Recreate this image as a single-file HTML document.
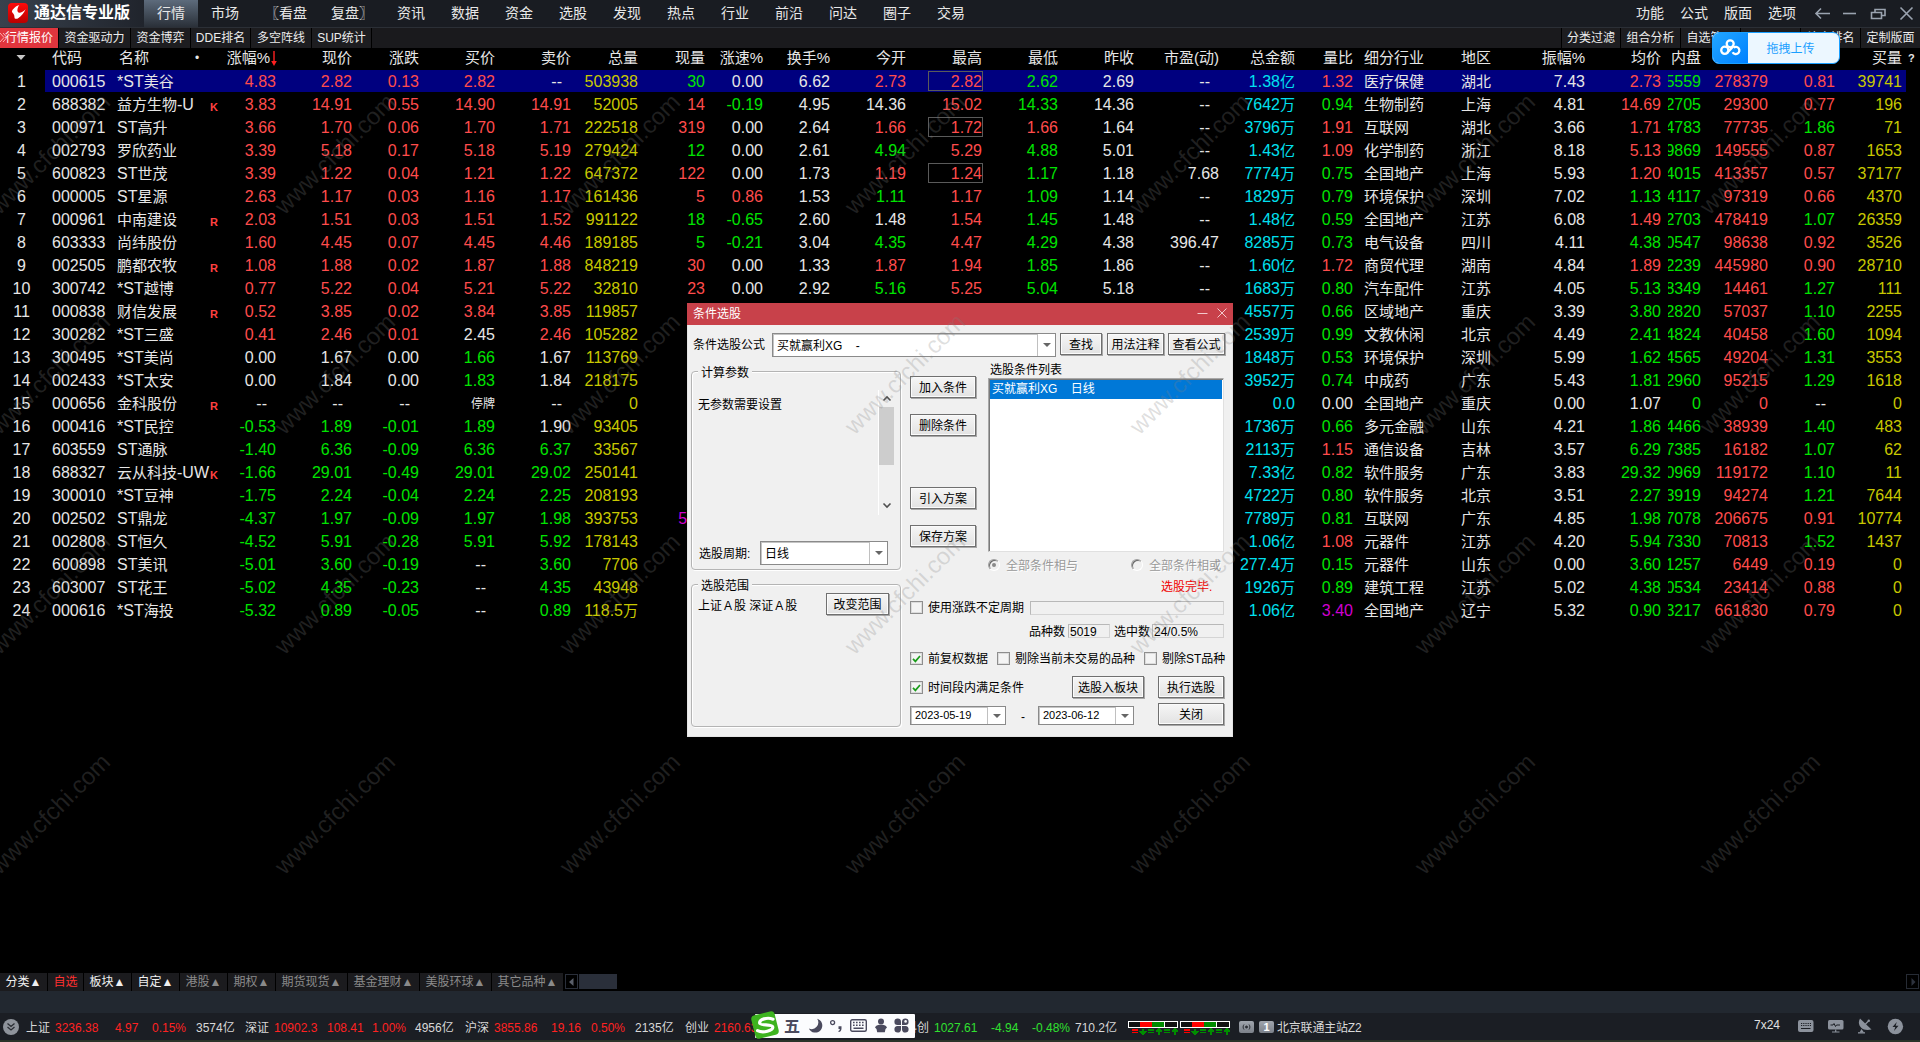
<!DOCTYPE html>
<html lang="zh-CN">
<head>
<meta charset="utf-8">
<title>通达信专业版</title>
<style>
*{box-sizing:border-box;margin:0;padding:0}
html,body{width:1920px;height:1042px;overflow:hidden;background:#000}
body{position:relative;font-family:"Liberation Sans","Noto Sans CJK SC",sans-serif;color:#e6e6e6;font-size:16px}
.abs{position:absolute}
/* title bar */
#tb{position:absolute;left:0;top:0;width:1920px;height:28px;background:#191c22;border-bottom:1px solid #2b2f36}
#tb .brand{position:absolute;left:0;top:0;width:144px;height:27px;background:linear-gradient(90deg,#38414d,#20242c)}
#tb .logo{position:absolute;left:8px;top:3px;width:20px;height:20px;border-radius:4px;background:linear-gradient(#ff0a0a,#b80000)}
#tb .ttl{position:absolute;left:34px;top:1px;font-size:16px;font-weight:bold;color:#fff;line-height:24px;letter-spacing:0px}
#tb .mi{position:absolute;top:0;height:27px;line-height:26px;font-size:14px;color:#e8e8e8;white-space:nowrap}
#tb .act{position:absolute;left:144px;top:0;width:54px;height:27px;background:linear-gradient(#5d6b7c,#2a3038)}
/* tab row */
#tabs{position:absolute;left:0;top:28px;width:1920px;height:20px;background:#1a1a1d}
#tabs .t{position:absolute;top:0;height:20px;line-height:20px;font-size:12px;color:#ececec;text-align:center;border-right:1px solid #000;background:#1d1d20;white-space:nowrap}
#tabs .t.on{background:#e0353d;color:#fff}
/* header */
#hd{position:absolute;left:0;top:48px;width:1920px;height:22px}
#hd span{position:absolute;top:0;line-height:20px;font-size:15px;color:#e6e6e6;white-space:nowrap}
/* rows */
.row{position:absolute;left:0;width:1920px;height:23px;line-height:24px;font-size:16px;white-space:nowrap}
.row.sel::before{content:"";position:absolute;left:45px;top:0;width:1861px;height:22px;background:#00007f}
.row span{position:absolute;top:0}
.n{left:0;width:43px;text-align:center;color:#e6e6e6}
.cd{left:52px;color:#e6e6e6}
.nm{left:117px;color:#e6e6e6;font-size:16px}
.v i,.nm i{font-style:normal;font-size:15px}
.mk{left:210px;top:2px!important;font-size:11px;font-weight:bold;color:#ff4040}
.ind{left:1364px;font-size:15px}.ar{left:1461px;font-size:15px}
.v{text-align:right}
.tp{font-size:12px}
.clip{left:1668px;width:33px;height:23px;overflow:hidden}
.clip b{position:absolute;right:0;top:0;font-weight:normal}
.bx{left:928px;top:1px!important;width:55px;height:20px;border:1px solid #5a5a5a}
.r{color:#ff4c4c}.g{color:#00e400}.w{color:#e6e6e6}.y{color:#c8c800}.c{color:#00e0f0}.m{color:#d000d0}
</style>
</head>
<body>
<style>
#bt{position:absolute;left:0;top:973px;width:1920px;height:18px;background:#000}
#bt .b{position:absolute;top:0;height:18px;line-height:19px;font-size:12px;color:#f0f0f0;background:#1b1b1e;text-align:center;white-space:nowrap;letter-spacing:0}
#bt .b.rd{color:#ff3030}
#bt .b.ds{color:#8a8a8a}
#bt .sb1{position:absolute;left:565px;top:1px;width:13px;height:15px;background:#000;border:1px solid #2a2f3a}
#bt .sb2{position:absolute;left:579px;top:1px;width:38px;height:15px;background:#2a2f3a}
#bt .sb3{position:absolute;left:1906px;top:1px;width:13px;height:15px;border:1px solid #262b34;background:#000}
#band{position:absolute;left:0;top:991px;width:1920px;height:22px;background:#222830}
#st{position:absolute;left:0;top:1013px;width:1920px;height:29px;background:#1b1e24;border-bottom:2px solid #2a3329}
#st span{position:absolute;top:0;line-height:31px;font-size:12px;color:#d8d8d8;white-space:nowrap}
#st span.sr{color:#ff2222}
#st span.sg{color:#30e030}
#st .dn{position:absolute;left:3px;top:6px;width:16px;height:16px;border-radius:8px;background:#8e939b}
#st .ime{position:absolute;left:750px;top:2px;width:165px;height:23px;background:#fbfbfb;border-radius:2px}
</style>
<div id="tb">
 <div class="brand"></div>
 <div class="logo"><svg width="20" height="20" viewBox="0 0 20 20"><path d="M11.3 2 C8 3 4.500 6 3.900 8.600 C4.500 10.500 6 11 6.250 12.500 L6.600 15.200 C7.500 16 9 15.800 9.800 15.400 C13 13.500 16 10 17.600 6.250 C15.500 8.500 13.500 9.800 11.300 9.800 C10 9.500 9.300 8.300 9.400 7 C9.600 5 10.300 3.200 11.300 2 Z" fill="#fff"/></svg></div>
 <div class="ttl">通达信专业版</div>
 <div class="act"></div>
 <span class="mi" style="left:157px">行情</span>
 <span class="mi" style="left:211px">市场</span>
 <span class="mi" style="left:265px">〖看盘</span>
 <span class="mi" style="left:331px">复盘〗</span>
 <span class="mi" style="left:397px">资讯</span>
 <span class="mi" style="left:451px">数据</span>
 <span class="mi" style="left:505px">资金</span>
 <span class="mi" style="left:559px">选股</span>
 <span class="mi" style="left:613px">发现</span>
 <span class="mi" style="left:667px">热点</span>
 <span class="mi" style="left:721px">行业</span>
 <span class="mi" style="left:775px">前沿</span>
 <span class="mi" style="left:829px">问达</span>
 <span class="mi" style="left:883px">圈子</span>
 <span class="mi" style="left:937px">交易</span>
 <span class="mi" style="left:1636px">功能</span>
 <span class="mi" style="left:1680px">公式</span>
 <span class="mi" style="left:1724px">版面</span>
 <span class="mi" style="left:1768px">选项</span>
 <svg class="abs" style="left:1812px;top:4px" width="106" height="20" viewBox="0 0 106 20" fill="none" stroke="#9aa3b0" stroke-width="1.6">
  <path d="M18 9.5 H4 M9 4.5 L4 9.5 L9 14.5"/>
  <path d="M31 9.5 H44" />
  <path d="M59.5 8.5 h10 v6 h-10 z M63 8.5 v-3 h10 v6 h-3.5"/>
  <path d="M88.5 3.5 L100.5 15.5 M100.5 3.5 L88.5 15.5"/>
 </svg>
</div>
<div id="tabs">
 <div class="t on" style="left:0;width:59px">行情报价</div>
 <svg class="abs" style="left:0;top:5px" width="8" height="9" viewBox="0 0 8 9" stroke="#ffb0b0" stroke-width="1" fill="none"><path d="M0 0 L4 4.5 L0 9 M3 0 L7 4.5 L3 9"/></svg>
 <div class="t" style="left:59px;width:72px">资金驱动力</div>
 <div class="t" style="left:131px;width:60px">资金博弈</div>
 <div class="t" style="left:191px;width:60px">DDE排名</div>
 <div class="t" style="left:251px;width:61px">多空阵线</div>
 <div class="t" style="left:312px;width:60px">SUP统计</div>
 <div class="t" style="left:1561px;width:60px;border-left:1px solid #000">分类过滤</div>
 <div class="t" style="left:1621px;width:60px">组合分析</div>
 <div class="t" style="left:1681px;width:60px">自选管理</div>
 <div class="t" style="left:1741px;width:60px"></div>
 <div class="t" style="left:1801px;width:60px">综合排名</div>
 <div class="t" style="left:1861px;width:59px;border-right:none">定制版面</div>
</div>
<div id="hd">
 <svg class="abs" style="left:16px;top:6px" width="10" height="7" viewBox="0 0 10 7"><path d="M0.5 1 H9.5 L5 6 Z" fill="#c8c8c8"/></svg>
 <span style="left:52px">代码</span>
 <span style="left:119px">名称</span>
 <span style="left:195px;font-size:12px">•</span>
 <span style="right:1650px">涨幅%</span>
 <svg class="abs" style="left:270px;top:3px" width="8" height="16" viewBox="0 0 8 16" stroke="#ff2020" fill="#ff2020"><path d="M4 0 V11" stroke-width="1.4"/><path d="M1.2 10 H6.8 L4 15 Z" stroke="none"/></svg>
 <span style="right:1568px">现价</span>
 <span style="right:1501px">涨跌</span>
 <span style="right:1425px">买价</span>
 <span style="right:1349px">卖价</span>
 <span style="right:1282px">总量</span>
 <span style="right:1215px">现量</span>
 <span style="right:1157px">涨速%</span>
 <span style="right:1090px">换手%</span>
 <span style="right:1014px">今开</span>
 <span style="right:938px">最高</span>
 <span style="right:862px">最低</span>
 <span style="right:786px">昨收</span>
 <span style="right:701px">市盈(动)</span>
 <span style="right:625px">总金额</span>
 <span style="right:567px">量比</span>
 <span style="left:1364px">细分行业</span>
 <span style="left:1461px">地区</span>
 <span style="right:335px">振幅%</span>
 <span style="right:259px">均价</span>
 <span style="left:1671px">内盘</span>
 <span style="right:18px">买量</span>
 <span style="left:1908px;font-size:11px;font-weight:bold">?</span>
</div>
<div id="grid">
<div class="row sel" style="top:70px">
<span class="n">1</span><span class="cd">000615</span><span class="nm">*ST<i>美谷</i></span>
<span class="v r" style="right:1644px">4.83</span>
<span class="v r" style="right:1568px">2.82</span>
<span class="v r" style="right:1501px">0.13</span>
<span class="v r" style="right:1425px">2.82</span>
<span class="v w" style="right:1358px">--</span>
<span class="v y" style="right:1282px">503938</span>
<span class="v g" style="right:1215px">30</span>
<span class="v w" style="right:1157px">0.00</span>
<span class="v w" style="right:1090px">6.62</span>
<span class="v r" style="right:1014px">2.73</span>
<span class="bx"></span>
<span class="v r" style="right:938px">2.82</span>
<span class="v g" style="right:862px">2.62</span>
<span class="v w" style="right:786px">2.69</span>
<span class="v w" style="right:710px">--</span>
<span class="v c" style="right:625px">1.38<i>亿</i></span>
<span class="v r" style="right:567px">1.32</span>
<span class="ind">医疗保健</span>
<span class="ar">湖北</span>
<span class="v w" style="right:335px">7.43</span>
<span class="v r" style="right:259px">2.73</span>
<span class="clip"><b class="g">225559</b></span>
<span class="v r" style="right:152px">278379</span>
<span class="v r" style="right:85px">0.81</span>
<span class="v y" style="right:18px">39741</span>
</div>
<div class="row" style="top:93px">
<span class="n">2</span><span class="cd">688382</span><span class="nm"><i>益方生物</i>-U</span>
<span class="mk">K</span>
<span class="v r" style="right:1644px">3.83</span>
<span class="v r" style="right:1568px">14.91</span>
<span class="v r" style="right:1501px">0.55</span>
<span class="v r" style="right:1425px">14.90</span>
<span class="v r" style="right:1349px">14.91</span>
<span class="v y" style="right:1282px">52005</span>
<span class="v r" style="right:1215px">14</span>
<span class="v g" style="right:1157px">-0.19</span>
<span class="v w" style="right:1090px">4.95</span>
<span class="v w" style="right:1014px">14.36</span>
<span class="v r" style="right:938px">15.02</span>
<span class="v g" style="right:862px">14.33</span>
<span class="v w" style="right:786px">14.36</span>
<span class="v w" style="right:710px">--</span>
<span class="v c" style="right:625px">7642<i>万</i></span>
<span class="v g" style="right:567px">0.94</span>
<span class="ind">生物制药</span>
<span class="ar">上海</span>
<span class="v w" style="right:335px">4.81</span>
<span class="v r" style="right:259px">14.69</span>
<span class="clip"><b class="g">22705</b></span>
<span class="v r" style="right:152px">29300</span>
<span class="v r" style="right:85px">0.77</span>
<span class="v y" style="right:18px">196</span>
</div>
<div class="row" style="top:116px">
<span class="n">3</span><span class="cd">000971</span><span class="nm">ST<i>高升</i></span>
<span class="v r" style="right:1644px">3.66</span>
<span class="v r" style="right:1568px">1.70</span>
<span class="v r" style="right:1501px">0.06</span>
<span class="v r" style="right:1425px">1.70</span>
<span class="v r" style="right:1349px">1.71</span>
<span class="v y" style="right:1282px">222518</span>
<span class="v r" style="right:1215px">319</span>
<span class="v w" style="right:1157px">0.00</span>
<span class="v w" style="right:1090px">2.64</span>
<span class="v r" style="right:1014px">1.66</span>
<span class="bx"></span>
<span class="v r" style="right:938px">1.72</span>
<span class="v r" style="right:862px">1.66</span>
<span class="v w" style="right:786px">1.64</span>
<span class="v w" style="right:710px">--</span>
<span class="v c" style="right:625px">3796<i>万</i></span>
<span class="v r" style="right:567px">1.91</span>
<span class="ind">互联网</span>
<span class="ar">湖北</span>
<span class="v w" style="right:335px">3.66</span>
<span class="v r" style="right:259px">1.71</span>
<span class="clip"><b class="g">144783</b></span>
<span class="v r" style="right:152px">77735</span>
<span class="v g" style="right:85px">1.86</span>
<span class="v y" style="right:18px">71</span>
</div>
<div class="row" style="top:139px">
<span class="n">4</span><span class="cd">002793</span><span class="nm"><i>罗欣药业</i></span>
<span class="v r" style="right:1644px">3.39</span>
<span class="v r" style="right:1568px">5.18</span>
<span class="v r" style="right:1501px">0.17</span>
<span class="v r" style="right:1425px">5.18</span>
<span class="v r" style="right:1349px">5.19</span>
<span class="v y" style="right:1282px">279424</span>
<span class="v g" style="right:1215px">12</span>
<span class="v w" style="right:1157px">0.00</span>
<span class="v w" style="right:1090px">2.61</span>
<span class="v g" style="right:1014px">4.94</span>
<span class="v r" style="right:938px">5.29</span>
<span class="v g" style="right:862px">4.88</span>
<span class="v w" style="right:786px">5.01</span>
<span class="v w" style="right:710px">--</span>
<span class="v c" style="right:625px">1.43<i>亿</i></span>
<span class="v r" style="right:567px">1.09</span>
<span class="ind">化学制药</span>
<span class="ar">浙江</span>
<span class="v w" style="right:335px">8.18</span>
<span class="v r" style="right:259px">5.13</span>
<span class="clip"><b class="g">129869</b></span>
<span class="v r" style="right:152px">149555</span>
<span class="v r" style="right:85px">0.87</span>
<span class="v y" style="right:18px">1653</span>
</div>
<div class="row" style="top:162px">
<span class="n">5</span><span class="cd">600823</span><span class="nm">ST<i>世茂</i></span>
<span class="v r" style="right:1644px">3.39</span>
<span class="v r" style="right:1568px">1.22</span>
<span class="v r" style="right:1501px">0.04</span>
<span class="v r" style="right:1425px">1.21</span>
<span class="v r" style="right:1349px">1.22</span>
<span class="v y" style="right:1282px">647372</span>
<span class="v r" style="right:1215px">122</span>
<span class="v w" style="right:1157px">0.00</span>
<span class="v w" style="right:1090px">1.73</span>
<span class="v r" style="right:1014px">1.19</span>
<span class="bx"></span>
<span class="v r" style="right:938px">1.24</span>
<span class="v g" style="right:862px">1.17</span>
<span class="v w" style="right:786px">1.18</span>
<span class="v w" style="right:701px">7.68</span>
<span class="v c" style="right:625px">7774<i>万</i></span>
<span class="v g" style="right:567px">0.75</span>
<span class="ind">全国地产</span>
<span class="ar">上海</span>
<span class="v w" style="right:335px">5.93</span>
<span class="v r" style="right:259px">1.20</span>
<span class="clip"><b class="g">234015</b></span>
<span class="v r" style="right:152px">413357</span>
<span class="v r" style="right:85px">0.57</span>
<span class="v y" style="right:18px">37177</span>
</div>
<div class="row" style="top:185px">
<span class="n">6</span><span class="cd">000005</span><span class="nm">ST<i>星源</i></span>
<span class="v r" style="right:1644px">2.63</span>
<span class="v r" style="right:1568px">1.17</span>
<span class="v r" style="right:1501px">0.03</span>
<span class="v r" style="right:1425px">1.16</span>
<span class="v r" style="right:1349px">1.17</span>
<span class="v y" style="right:1282px">161436</span>
<span class="v r" style="right:1215px">5</span>
<span class="v r" style="right:1157px">0.86</span>
<span class="v w" style="right:1090px">1.53</span>
<span class="v g" style="right:1014px">1.11</span>
<span class="v r" style="right:938px">1.17</span>
<span class="v g" style="right:862px">1.09</span>
<span class="v w" style="right:786px">1.14</span>
<span class="v w" style="right:710px">--</span>
<span class="v c" style="right:625px">1829<i>万</i></span>
<span class="v g" style="right:567px">0.79</span>
<span class="ind">环境保护</span>
<span class="ar">深圳</span>
<span class="v w" style="right:335px">7.02</span>
<span class="v g" style="right:259px">1.13</span>
<span class="clip"><b class="g">64117</b></span>
<span class="v r" style="right:152px">97319</span>
<span class="v r" style="right:85px">0.66</span>
<span class="v y" style="right:18px">4370</span>
</div>
<div class="row" style="top:208px">
<span class="n">7</span><span class="cd">000961</span><span class="nm"><i>中南建设</i></span>
<span class="mk">R</span>
<span class="v r" style="right:1644px">2.03</span>
<span class="v r" style="right:1568px">1.51</span>
<span class="v r" style="right:1501px">0.03</span>
<span class="v r" style="right:1425px">1.51</span>
<span class="v r" style="right:1349px">1.52</span>
<span class="v y" style="right:1282px">991122</span>
<span class="v g" style="right:1215px">18</span>
<span class="v g" style="right:1157px">-0.65</span>
<span class="v w" style="right:1090px">2.60</span>
<span class="v w" style="right:1014px">1.48</span>
<span class="v r" style="right:938px">1.54</span>
<span class="v g" style="right:862px">1.45</span>
<span class="v w" style="right:786px">1.48</span>
<span class="v w" style="right:710px">--</span>
<span class="v c" style="right:625px">1.48<i>亿</i></span>
<span class="v g" style="right:567px">0.59</span>
<span class="ind">全国地产</span>
<span class="ar">江苏</span>
<span class="v w" style="right:335px">6.08</span>
<span class="v r" style="right:259px">1.49</span>
<span class="clip"><b class="g">512703</b></span>
<span class="v r" style="right:152px">478419</span>
<span class="v g" style="right:85px">1.07</span>
<span class="v y" style="right:18px">26359</span>
</div>
<div class="row" style="top:231px">
<span class="n">8</span><span class="cd">603333</span><span class="nm"><i>尚纬股份</i></span>
<span class="v r" style="right:1644px">1.60</span>
<span class="v r" style="right:1568px">4.45</span>
<span class="v r" style="right:1501px">0.07</span>
<span class="v r" style="right:1425px">4.45</span>
<span class="v r" style="right:1349px">4.46</span>
<span class="v y" style="right:1282px">189185</span>
<span class="v g" style="right:1215px">5</span>
<span class="v g" style="right:1157px">-0.21</span>
<span class="v w" style="right:1090px">3.04</span>
<span class="v g" style="right:1014px">4.35</span>
<span class="v r" style="right:938px">4.47</span>
<span class="v g" style="right:862px">4.29</span>
<span class="v w" style="right:786px">4.38</span>
<span class="v w" style="right:701px">396.47</span>
<span class="v c" style="right:625px">8285<i>万</i></span>
<span class="v g" style="right:567px">0.73</span>
<span class="ind">电气设备</span>
<span class="ar">四川</span>
<span class="v w" style="right:335px">4.11</span>
<span class="v g" style="right:259px">4.38</span>
<span class="clip"><b class="g">90547</b></span>
<span class="v r" style="right:152px">98638</span>
<span class="v r" style="right:85px">0.92</span>
<span class="v y" style="right:18px">3526</span>
</div>
<div class="row" style="top:254px">
<span class="n">9</span><span class="cd">002505</span><span class="nm"><i>鹏都农牧</i></span>
<span class="mk">R</span>
<span class="v r" style="right:1644px">1.08</span>
<span class="v r" style="right:1568px">1.88</span>
<span class="v r" style="right:1501px">0.02</span>
<span class="v r" style="right:1425px">1.87</span>
<span class="v r" style="right:1349px">1.88</span>
<span class="v y" style="right:1282px">848219</span>
<span class="v r" style="right:1215px">30</span>
<span class="v w" style="right:1157px">0.00</span>
<span class="v w" style="right:1090px">1.33</span>
<span class="v r" style="right:1014px">1.87</span>
<span class="v r" style="right:938px">1.94</span>
<span class="v g" style="right:862px">1.85</span>
<span class="v w" style="right:786px">1.86</span>
<span class="v w" style="right:710px">--</span>
<span class="v c" style="right:625px">1.60<i>亿</i></span>
<span class="v r" style="right:567px">1.72</span>
<span class="ind">商贸代理</span>
<span class="ar">湖南</span>
<span class="v w" style="right:335px">4.84</span>
<span class="v r" style="right:259px">1.89</span>
<span class="clip"><b class="g">402239</b></span>
<span class="v r" style="right:152px">445980</span>
<span class="v r" style="right:85px">0.90</span>
<span class="v y" style="right:18px">28710</span>
</div>
<div class="row" style="top:277px">
<span class="n">10</span><span class="cd">300742</span><span class="nm">*ST<i>越博</i></span>
<span class="v r" style="right:1644px">0.77</span>
<span class="v r" style="right:1568px">5.22</span>
<span class="v r" style="right:1501px">0.04</span>
<span class="v r" style="right:1425px">5.21</span>
<span class="v r" style="right:1349px">5.22</span>
<span class="v y" style="right:1282px">32810</span>
<span class="v r" style="right:1215px">23</span>
<span class="v w" style="right:1157px">0.00</span>
<span class="v w" style="right:1090px">2.92</span>
<span class="v g" style="right:1014px">5.16</span>
<span class="v r" style="right:938px">5.25</span>
<span class="v g" style="right:862px">5.04</span>
<span class="v w" style="right:786px">5.18</span>
<span class="v w" style="right:710px">--</span>
<span class="v c" style="right:625px">1683<i>万</i></span>
<span class="v g" style="right:567px">0.80</span>
<span class="ind">汽车配件</span>
<span class="ar">江苏</span>
<span class="v w" style="right:335px">4.05</span>
<span class="v g" style="right:259px">5.13</span>
<span class="clip"><b class="g">18349</b></span>
<span class="v r" style="right:152px">14461</span>
<span class="v g" style="right:85px">1.27</span>
<span class="v y" style="right:18px">111</span>
</div>
<div class="row" style="top:300px">
<span class="n">11</span><span class="cd">000838</span><span class="nm"><i>财信发展</i></span>
<span class="mk">R</span>
<span class="v r" style="right:1644px">0.52</span>
<span class="v r" style="right:1568px">3.85</span>
<span class="v r" style="right:1501px">0.02</span>
<span class="v r" style="right:1425px">3.84</span>
<span class="v r" style="right:1349px">3.85</span>
<span class="v y" style="right:1282px">119857</span>
<span class="v g" style="right:1215px">10</span>
<span class="v w" style="right:1157px">0.00</span>
<span class="v w" style="right:1090px">1.09</span>
<span class="v g" style="right:1014px">3.82</span>
<span class="v r" style="right:938px">3.88</span>
<span class="v g" style="right:862px">3.75</span>
<span class="v w" style="right:786px">3.83</span>
<span class="v w" style="right:710px">--</span>
<span class="v c" style="right:625px">4557<i>万</i></span>
<span class="v g" style="right:567px">0.66</span>
<span class="ind">区域地产</span>
<span class="ar">重庆</span>
<span class="v w" style="right:335px">3.39</span>
<span class="v g" style="right:259px">3.80</span>
<span class="clip"><b class="g">62820</b></span>
<span class="v r" style="right:152px">57037</span>
<span class="v g" style="right:85px">1.10</span>
<span class="v y" style="right:18px">2255</span>
</div>
<div class="row" style="top:323px">
<span class="n">12</span><span class="cd">300282</span><span class="nm">*ST<i>三盛</i></span>
<span class="v r" style="right:1644px">0.41</span>
<span class="v r" style="right:1568px">2.46</span>
<span class="v r" style="right:1501px">0.01</span>
<span class="v w" style="right:1425px">2.45</span>
<span class="v r" style="right:1349px">2.46</span>
<span class="v y" style="right:1282px">105282</span>
<span class="v r" style="right:1215px">8</span>
<span class="v w" style="right:1157px">0.00</span>
<span class="v w" style="right:1090px">2.81</span>
<span class="v g" style="right:1014px">2.44</span>
<span class="v r" style="right:938px">2.47</span>
<span class="v g" style="right:862px">2.36</span>
<span class="v w" style="right:786px">2.45</span>
<span class="v w" style="right:710px">--</span>
<span class="v c" style="right:625px">2539<i>万</i></span>
<span class="v g" style="right:567px">0.99</span>
<span class="ind">文教休闲</span>
<span class="ar">北京</span>
<span class="v w" style="right:335px">4.49</span>
<span class="v g" style="right:259px">2.41</span>
<span class="clip"><b class="g">64824</b></span>
<span class="v r" style="right:152px">40458</span>
<span class="v g" style="right:85px">1.60</span>
<span class="v y" style="right:18px">1094</span>
</div>
<div class="row" style="top:346px">
<span class="n">13</span><span class="cd">300495</span><span class="nm">*ST<i>美尚</i></span>
<span class="v w" style="right:1644px">0.00</span>
<span class="v w" style="right:1568px">1.67</span>
<span class="v w" style="right:1501px">0.00</span>
<span class="v g" style="right:1425px">1.66</span>
<span class="v w" style="right:1349px">1.67</span>
<span class="v y" style="right:1282px">113769</span>
<span class="v g" style="right:1215px">6</span>
<span class="v w" style="right:1157px">0.00</span>
<span class="v w" style="right:1090px">1.69</span>
<span class="v g" style="right:1014px">1.66</span>
<span class="v r" style="right:938px">1.68</span>
<span class="v g" style="right:862px">1.58</span>
<span class="v w" style="right:786px">1.67</span>
<span class="v w" style="right:710px">--</span>
<span class="v c" style="right:625px">1848<i>万</i></span>
<span class="v g" style="right:567px">0.53</span>
<span class="ind">环境保护</span>
<span class="ar">深圳</span>
<span class="v w" style="right:335px">5.99</span>
<span class="v g" style="right:259px">1.62</span>
<span class="clip"><b class="g">64565</b></span>
<span class="v r" style="right:152px">49204</span>
<span class="v g" style="right:85px">1.31</span>
<span class="v y" style="right:18px">3553</span>
</div>
<div class="row" style="top:369px">
<span class="n">14</span><span class="cd">002433</span><span class="nm">*ST<i>太安</i></span>
<span class="v w" style="right:1644px">0.00</span>
<span class="v w" style="right:1568px">1.84</span>
<span class="v w" style="right:1501px">0.00</span>
<span class="v g" style="right:1425px">1.83</span>
<span class="v w" style="right:1349px">1.84</span>
<span class="v y" style="right:1282px">218175</span>
<span class="v r" style="right:1215px">20</span>
<span class="v w" style="right:1157px">0.00</span>
<span class="v w" style="right:1090px">2.85</span>
<span class="v g" style="right:1014px">1.83</span>
<span class="v r" style="right:938px">1.87</span>
<span class="v g" style="right:862px">1.77</span>
<span class="v w" style="right:786px">1.84</span>
<span class="v w" style="right:710px">--</span>
<span class="v c" style="right:625px">3952<i>万</i></span>
<span class="v g" style="right:567px">0.74</span>
<span class="ind">中成药</span>
<span class="ar">广东</span>
<span class="v w" style="right:335px">5.43</span>
<span class="v g" style="right:259px">1.81</span>
<span class="clip"><b class="g">122960</b></span>
<span class="v r" style="right:152px">95215</span>
<span class="v g" style="right:85px">1.29</span>
<span class="v y" style="right:18px">1618</span>
</div>
<div class="row" style="top:392px">
<span class="n">15</span><span class="cd">000656</span><span class="nm"><i>金科股份</i></span>
<span class="mk">R</span>
<span class="v w" style="right:1653px">--</span>
<span class="v w" style="right:1577px">--</span>
<span class="v w" style="right:1510px">--</span>
<span class="v w tp" style="right:1425px">停牌</span>
<span class="v w" style="right:1358px">--</span>
<span class="v y" style="right:1282px">0</span>
<span class="v w" style="right:1215px">0</span>
<span class="v w" style="right:1157px">0.00</span>
<span class="v w" style="right:1090px">0.00</span>
<span class="v w" style="right:1023px">--</span>
<span class="v w" style="right:947px">--</span>
<span class="v w" style="right:871px">--</span>
<span class="v w" style="right:786px">1.07</span>
<span class="v w" style="right:710px">--</span>
<span class="v c" style="right:625px">0.0</span>
<span class="v w" style="right:567px">0.00</span>
<span class="ind">全国地产</span>
<span class="ar">重庆</span>
<span class="v w" style="right:335px">0.00</span>
<span class="v w" style="right:259px">1.07</span>
<span class="clip"><b class="g">0</b></span>
<span class="v r" style="right:152px">0</span>
<span class="v w" style="right:94px">--</span>
<span class="v y" style="right:18px">0</span>
</div>
<div class="row" style="top:415px">
<span class="n">16</span><span class="cd">000416</span><span class="nm">*ST<i>民控</i></span>
<span class="v g" style="right:1644px">-0.53</span>
<span class="v g" style="right:1568px">1.89</span>
<span class="v g" style="right:1501px">-0.01</span>
<span class="v g" style="right:1425px">1.89</span>
<span class="v w" style="right:1349px">1.90</span>
<span class="v y" style="right:1282px">93405</span>
<span class="v g" style="right:1215px">2</span>
<span class="v w" style="right:1157px">0.00</span>
<span class="v w" style="right:1090px">1.76</span>
<span class="v w" style="right:1014px">1.90</span>
<span class="v r" style="right:938px">1.91</span>
<span class="v g" style="right:862px">1.83</span>
<span class="v w" style="right:786px">1.90</span>
<span class="v w" style="right:710px">--</span>
<span class="v c" style="right:625px">1736<i>万</i></span>
<span class="v g" style="right:567px">0.66</span>
<span class="ind">多元金融</span>
<span class="ar">山东</span>
<span class="v w" style="right:335px">4.21</span>
<span class="v g" style="right:259px">1.86</span>
<span class="clip"><b class="g">54466</b></span>
<span class="v r" style="right:152px">38939</span>
<span class="v g" style="right:85px">1.40</span>
<span class="v y" style="right:18px">483</span>
</div>
<div class="row" style="top:438px">
<span class="n">17</span><span class="cd">603559</span><span class="nm">ST<i>通脉</i></span>
<span class="v g" style="right:1644px">-1.40</span>
<span class="v g" style="right:1568px">6.36</span>
<span class="v g" style="right:1501px">-0.09</span>
<span class="v g" style="right:1425px">6.36</span>
<span class="v g" style="right:1349px">6.37</span>
<span class="v y" style="right:1282px">33567</span>
<span class="v r" style="right:1215px">3</span>
<span class="v w" style="right:1157px">0.00</span>
<span class="v w" style="right:1090px">2.34</span>
<span class="v w" style="right:1014px">6.45</span>
<span class="v w" style="right:938px">6.45</span>
<span class="v g" style="right:862px">6.22</span>
<span class="v w" style="right:786px">6.45</span>
<span class="v w" style="right:710px">--</span>
<span class="v c" style="right:625px">2113<i>万</i></span>
<span class="v r" style="right:567px">1.15</span>
<span class="ind">通信设备</span>
<span class="ar">吉林</span>
<span class="v w" style="right:335px">3.57</span>
<span class="v g" style="right:259px">6.29</span>
<span class="clip"><b class="g">17385</b></span>
<span class="v r" style="right:152px">16182</span>
<span class="v g" style="right:85px">1.07</span>
<span class="v y" style="right:18px">62</span>
</div>
<div class="row" style="top:461px">
<span class="n">18</span><span class="cd">688327</span><span class="nm"><i>云从科技</i>-UW</span>
<span class="mk">K</span>
<span class="v g" style="right:1644px">-1.66</span>
<span class="v g" style="right:1568px">29.01</span>
<span class="v g" style="right:1501px">-0.49</span>
<span class="v g" style="right:1425px">29.01</span>
<span class="v g" style="right:1349px">29.02</span>
<span class="v y" style="right:1282px">250141</span>
<span class="v g" style="right:1215px">24</span>
<span class="v r" style="right:1157px">0.03</span>
<span class="v w" style="right:1090px">4.66</span>
<span class="v w" style="right:1014px">29.50</span>
<span class="v r" style="right:938px">29.98</span>
<span class="v g" style="right:862px">28.85</span>
<span class="v w" style="right:786px">29.50</span>
<span class="v w" style="right:710px">--</span>
<span class="v c" style="right:625px">7.33<i>亿</i></span>
<span class="v g" style="right:567px">0.82</span>
<span class="ind">软件服务</span>
<span class="ar">广东</span>
<span class="v w" style="right:335px">3.83</span>
<span class="v g" style="right:259px">29.32</span>
<span class="clip"><b class="g">130969</b></span>
<span class="v r" style="right:152px">119172</span>
<span class="v g" style="right:85px">1.10</span>
<span class="v y" style="right:18px">11</span>
</div>
<div class="row" style="top:484px">
<span class="n">19</span><span class="cd">300010</span><span class="nm">*ST<i>豆神</i></span>
<span class="v g" style="right:1644px">-1.75</span>
<span class="v g" style="right:1568px">2.24</span>
<span class="v g" style="right:1501px">-0.04</span>
<span class="v g" style="right:1425px">2.24</span>
<span class="v g" style="right:1349px">2.25</span>
<span class="v y" style="right:1282px">208193</span>
<span class="v g" style="right:1215px">15</span>
<span class="v w" style="right:1157px">0.00</span>
<span class="v w" style="right:1090px">2.52</span>
<span class="v w" style="right:1014px">2.28</span>
<span class="v r" style="right:938px">2.31</span>
<span class="v g" style="right:862px">2.23</span>
<span class="v w" style="right:786px">2.28</span>
<span class="v w" style="right:710px">--</span>
<span class="v c" style="right:625px">4722<i>万</i></span>
<span class="v g" style="right:567px">0.80</span>
<span class="ind">软件服务</span>
<span class="ar">北京</span>
<span class="v w" style="right:335px">3.51</span>
<span class="v g" style="right:259px">2.27</span>
<span class="clip"><b class="g">113919</b></span>
<span class="v r" style="right:152px">94274</span>
<span class="v g" style="right:85px">1.21</span>
<span class="v y" style="right:18px">7644</span>
</div>
<div class="row" style="top:507px">
<span class="n">20</span><span class="cd">002502</span><span class="nm">ST<i>鼎龙</i></span>
<span class="v g" style="right:1644px">-4.37</span>
<span class="v g" style="right:1568px">1.97</span>
<span class="v g" style="right:1501px">-0.09</span>
<span class="v g" style="right:1425px">1.97</span>
<span class="v g" style="right:1349px">1.98</span>
<span class="v y" style="right:1282px">393753</span>
<span class="v m" style="right:1215px">500</span>
<span class="v w" style="right:1157px">0.00</span>
<span class="v w" style="right:1090px">4.28</span>
<span class="v g" style="right:1014px">2.05</span>
<span class="v w" style="right:938px">2.06</span>
<span class="v g" style="right:862px">1.96</span>
<span class="v w" style="right:786px">2.06</span>
<span class="v w" style="right:710px">--</span>
<span class="v c" style="right:625px">7789<i>万</i></span>
<span class="v g" style="right:567px">0.81</span>
<span class="ind">互联网</span>
<span class="ar">广东</span>
<span class="v w" style="right:335px">4.85</span>
<span class="v g" style="right:259px">1.98</span>
<span class="clip"><b class="g">187078</b></span>
<span class="v r" style="right:152px">206675</span>
<span class="v r" style="right:85px">0.91</span>
<span class="v y" style="right:18px">10774</span>
</div>
<div class="row" style="top:530px">
<span class="n">21</span><span class="cd">002808</span><span class="nm">ST<i>恒久</i></span>
<span class="v g" style="right:1644px">-4.52</span>
<span class="v g" style="right:1568px">5.91</span>
<span class="v g" style="right:1501px">-0.28</span>
<span class="v g" style="right:1425px">5.91</span>
<span class="v g" style="right:1349px">5.92</span>
<span class="v y" style="right:1282px">178143</span>
<span class="v g" style="right:1215px">11</span>
<span class="v w" style="right:1157px">0.00</span>
<span class="v w" style="right:1090px">6.63</span>
<span class="v g" style="right:1014px">6.15</span>
<span class="v g" style="right:938px">6.17</span>
<span class="v g" style="right:862px">5.91</span>
<span class="v w" style="right:786px">6.19</span>
<span class="v w" style="right:710px">--</span>
<span class="v c" style="right:625px">1.06<i>亿</i></span>
<span class="v r" style="right:567px">1.08</span>
<span class="ind">元器件</span>
<span class="ar">江苏</span>
<span class="v w" style="right:335px">4.20</span>
<span class="v g" style="right:259px">5.94</span>
<span class="clip"><b class="g">107330</b></span>
<span class="v r" style="right:152px">70813</span>
<span class="v g" style="right:85px">1.52</span>
<span class="v y" style="right:18px">1437</span>
</div>
<div class="row" style="top:553px">
<span class="n">22</span><span class="cd">600898</span><span class="nm">ST<i>美讯</i></span>
<span class="v g" style="right:1644px">-5.01</span>
<span class="v g" style="right:1568px">3.60</span>
<span class="v g" style="right:1501px">-0.19</span>
<span class="v w" style="right:1434px">--</span>
<span class="v g" style="right:1349px">3.60</span>
<span class="v y" style="right:1282px">7706</span>
<span class="v g" style="right:1215px">3</span>
<span class="v w" style="right:1157px">0.00</span>
<span class="v w" style="right:1090px">0.27</span>
<span class="v g" style="right:1014px">3.60</span>
<span class="v g" style="right:938px">3.60</span>
<span class="v g" style="right:862px">3.60</span>
<span class="v w" style="right:786px">3.79</span>
<span class="v w" style="right:710px">--</span>
<span class="v c" style="right:625px">277.4<i>万</i></span>
<span class="v g" style="right:567px">0.15</span>
<span class="ind">元器件</span>
<span class="ar">山东</span>
<span class="v w" style="right:335px">0.00</span>
<span class="v g" style="right:259px">3.60</span>
<span class="clip"><b class="g">1257</b></span>
<span class="v r" style="right:152px">6449</span>
<span class="v r" style="right:85px">0.19</span>
<span class="v y" style="right:18px">0</span>
</div>
<div class="row" style="top:576px">
<span class="n">23</span><span class="cd">603007</span><span class="nm">ST<i>花王</i></span>
<span class="v g" style="right:1644px">-5.02</span>
<span class="v g" style="right:1568px">4.35</span>
<span class="v g" style="right:1501px">-0.23</span>
<span class="v w" style="right:1434px">--</span>
<span class="v g" style="right:1349px">4.35</span>
<span class="v y" style="right:1282px">43948</span>
<span class="v g" style="right:1215px">9</span>
<span class="v w" style="right:1157px">0.00</span>
<span class="v w" style="right:1090px">1.31</span>
<span class="v g" style="right:1014px">4.50</span>
<span class="v g" style="right:938px">4.58</span>
<span class="v g" style="right:862px">4.35</span>
<span class="v w" style="right:786px">4.58</span>
<span class="v w" style="right:710px">--</span>
<span class="v c" style="right:625px">1926<i>万</i></span>
<span class="v g" style="right:567px">0.89</span>
<span class="ind">建筑工程</span>
<span class="ar">江苏</span>
<span class="v w" style="right:335px">5.02</span>
<span class="v g" style="right:259px">4.38</span>
<span class="clip"><b class="g">20534</b></span>
<span class="v r" style="right:152px">23414</span>
<span class="v r" style="right:85px">0.88</span>
<span class="v y" style="right:18px">0</span>
</div>
<div class="row" style="top:599px">
<span class="n">24</span><span class="cd">000616</span><span class="nm">*ST<i>海投</i></span>
<span class="v g" style="right:1644px">-5.32</span>
<span class="v g" style="right:1568px">0.89</span>
<span class="v g" style="right:1501px">-0.05</span>
<span class="v w" style="right:1434px">--</span>
<span class="v g" style="right:1349px">0.89</span>
<span class="v y" style="right:1282px">118.5<i>万</i></span>
<span class="v g" style="right:1215px">60</span>
<span class="v w" style="right:1157px">0.00</span>
<span class="v w" style="right:1090px">8.28</span>
<span class="v w" style="right:1014px">0.94</span>
<span class="v w" style="right:938px">0.94</span>
<span class="v g" style="right:862px">0.89</span>
<span class="v w" style="right:786px">0.94</span>
<span class="v w" style="right:710px">--</span>
<span class="v c" style="right:625px">1.06<i>亿</i></span>
<span class="v m" style="right:567px">3.40</span>
<span class="ind">全国地产</span>
<span class="ar">辽宁</span>
<span class="v w" style="right:335px">5.32</span>
<span class="v g" style="right:259px">0.90</span>
<span class="clip"><b class="g">523217</b></span>
<span class="v r" style="right:152px">661830</span>
<span class="v r" style="right:85px">0.79</span>
<span class="v y" style="right:18px">0</span>
</div></div>
<div id="bt">
 <div class="b" style="left:0;width:47px">分类▲</div>
 <div class="b rd" style="left:48px;width:35px">自选</div>
 <div class="b" style="left:84px;width:47px">板块▲</div>
 <div class="b" style="left:132px;width:47px">自定▲</div>
 <div class="b ds" style="left:180px;width:47px">港股▲</div>
 <div class="b ds" style="left:228px;width:47px">期权▲</div>
 <div class="b ds" style="left:276px;width:71px">期货现货▲</div>
 <div class="b ds" style="left:348px;width:71px">基金理财▲</div>
 <div class="b ds" style="left:420px;width:71px">美股环球▲</div>
 <div class="b ds" style="left:492px;width:71px">其它品种▲</div>
 <div class="sb1"></div><div class="sb2"></div>
 <svg class="abs" style="left:569px;top:5px" width="5" height="8" viewBox="0 0 5 8"><path d="M4.5 0 V8 L0 4 Z" fill="#5a5f6a"/></svg>
 <div class="sb3"></div>
 <svg class="abs" style="left:1911px;top:5px" width="5" height="8" viewBox="0 0 5 8"><path d="M0.500 0 V8 L4.500 4 Z" fill="#2d323d"/></svg>
</div>
<div id="band"></div>
<div id="st">
 <div class="dn"><svg width="16" height="16" viewBox="0 0 16 16" fill="none" stroke="#2a2d33" stroke-width="1.3"><path d="M4.5 4.5 L8 7.5 L11.5 4.5 M4.5 8 L8 11 L11.5 8"/></svg></div>
 <span style="left:26px">上证</span><span class="sr" style="left:55px">3236.38</span><span class="sr" style="left:115px">4.97</span><span class="sr" style="left:152px">0.15%</span><span style="left:196px">3574亿</span>
 <span style="left:245px">深证</span><span class="sr" style="left:274px">10902.3</span><span class="sr" style="left:327px">108.41</span><span class="sr" style="left:372px">1.00%</span><span style="left:415px">4956亿</span>
 <span style="left:465px">沪深</span><span class="sr" style="left:494px">3855.86</span><span class="sr" style="left:551px">19.16</span><span class="sr" style="left:591px">0.50%</span><span style="left:635px">2135亿</span>
 <span style="left:685px">创业</span><span class="sr" style="left:714px">2160.63</span><span class="sr" style="left:771px">-4.58</span><span class="sr" style="left:811px">0.21%</span><span style="left:855px">1882亿</span>
 <span style="left:905px">科创</span><span class="sg" style="left:934px">1027.61</span><span class="sg" style="left:991px">-4.94</span><span class="sg" style="left:1032px">-0.48%</span><span style="left:1075px">710.2亿</span>

</div>
<style>
#dlg{position:absolute;left:687px;top:303px;width:546px;height:434px;background:#f0f0f0;border:1px solid #e4e4e4;border-top-color:#c8414a;font-family:"Liberation Sans","Noto Sans CJK SC",sans-serif;font-size:12px;color:#000}
#dlg .tt{position:absolute;left:-1px;top:-1px;width:546px;height:22px;background:#c8414a;color:#fff;line-height:22px;padding-left:6px;font-size:12px}
#dlg .in{position:absolute;left:-688px;top:-304px;width:0;height:0}
#dlg .in>*{position:absolute}
#dlg .in span{white-space:nowrap;line-height:16px;font-size:12px}
.btn{border:1px solid #707070;background:linear-gradient(#f6f6f6,#e2e2e2);box-shadow:inset 0 0 0 1px #fbfbfb,1px 1px 0 #a8a8a8;text-align:center;font-size:12px;line-height:20px;padding-top:1px;height:22px;color:#000;white-space:nowrap}
.cmb{background:#fff;border:1px solid #8a8a8a;box-shadow:inset 1px 1px 0 #c4c4c4}
.cmb i{position:absolute;right:0;top:0;bottom:0;width:18px;border-left:1px solid #c0c0c0;background:#fff}
.cmb i::after{content:"";position:absolute;left:5px;top:50%;margin-top:-2px;border:4px solid transparent;border-top:4px solid #666;border-bottom:none}
.cmb span{position:absolute;left:4px;top:50%;margin-top:-7px}
.grp{border:1px solid #b4b4b4;border-radius:4px;box-shadow:1px 1px 0 #fff, inset 1px 1px 0 #fff}
.grp b{position:absolute;left:6px;top:-6px;background:#f0f0f0;padding:0 3px;font-weight:normal;font-size:12px;line-height:14px;white-space:nowrap}
.cb{width:13px;height:13px;background:#f4f4f4;border:1px solid #8e8e8e;box-shadow:inset 0 0 0 1px #dcdcdc}
.fld{border:1px solid #d4d4d4;border-top-color:#b8b8b8;border-left-color:#b8b8b8;background:#f0f0f0;height:14px;line-height:14px;font-size:12px;padding-left:1px;white-space:nowrap}
.fw{display:inline-block;width:12px;text-align:center;font-style:normal}
.rad{width:12px;height:12px;border-radius:6px;border:1px solid #a0a0a0;border-right-color:#fff;border-bottom-color:#fff;background:#f0f0f0;box-shadow:inset 1px 1px 0 #6a6a6a}
</style>
<div id="dlg">
 <div class="tt">条件选股</div>
 <svg class="abs" style="left:508px;top:3px" width="34" height="12" viewBox="0 0 34 12" stroke="#f3c9cc" stroke-width="1" fill="none"><path d="M1.5 6.5 H11.5"/><path d="M21.5 1.5 L30.5 10.5 M30.5 1.5 L21.5 10.5"/></svg>
 <div class="in">
  <span style="left:693px;top:337px">条件选股公式</span>
  <div class="cmb" style="left:772px;top:333px;width:284px;height:24px"><span>买就赢利XG&nbsp;&nbsp;&nbsp;&nbsp;-</span><i></i></div>
  <div class="btn" style="left:1060px;top:333px;width:42px">查找</div>
  <div class="btn" style="left:1107px;top:333px;width:57px">用法注释</div>
  <div class="btn" style="left:1168px;top:333px;width:57px">查看公式</div>

  <div class="grp" style="left:691px;top:371px;width:210px;height:199px"><b>计算参数</b></div>
  <span style="left:698px;top:397px">无参数需要设置</span>
  <div style="left:878px;top:390px;width:1px;height:125px;background:#fff"></div>
  <div style="left:879px;top:407px;width:15px;height:58px;background:#cdcdcd"></div>
  <svg style="left:882px;top:395px" width="10" height="7" viewBox="0 0 10 7" fill="none" stroke="#505050" stroke-width="1.6"><path d="M1.5 5.5 L5 2 L8.5 5.5"/></svg>
  <svg style="left:882px;top:502px" width="10" height="7" viewBox="0 0 10 7" fill="none" stroke="#505050" stroke-width="1.6"><path d="M1.5 1.5 L5 5 L8.5 1.5"/></svg>
  <span style="left:699px;top:546px">选股周期:</span>
  <div class="cmb" style="left:760px;top:541px;width:128px;height:24px"><span>日线</span><i></i></div>

  <div class="btn" style="left:910px;top:376px;width:66px">加入条件</div>
  <div class="btn" style="left:910px;top:414px;width:66px">删除条件</div>
  <div class="btn" style="left:910px;top:487px;width:66px">引入方案</div>
  <div class="btn" style="left:910px;top:525px;width:66px">保存方案</div>

  <span style="left:990px;top:362px">选股条件列表</span>
  <div style="left:988px;top:378px;width:236px;height:174px;background:#fff;border:1px solid #a8a8a8;border-right-color:#e0e0e0;border-bottom-color:#e0e0e0;box-shadow:inset 1px 1px 0 #7a7a7a"></div>
  <div style="left:990px;top:380px;width:232px;height:19px;background:#0078d7;color:#fff;line-height:19px;padding-left:2px;font-size:12px;white-space:nowrap">买就赢利XG&nbsp;&nbsp;&nbsp;&nbsp;日线</div>

  <div class="rad" style="left:988px;top:559px"></div><div style="left:992px;top:563px;width:4px;height:4px;border-radius:2px;background:#8a8a8a"></div>
  <span style="left:1006px;top:558px;color:#9a9a9a;text-shadow:1px 1px 0 #fff">全部条件相与</span>
  <div class="rad" style="left:1131px;top:559px"></div>
  <span style="left:1149px;top:558px;color:#9a9a9a;text-shadow:1px 1px 0 #fff">全部条件相或</span>
  <span style="left:1161px;top:579px;color:#f00000">选股完毕.</span>

  <div class="cb" style="left:910px;top:601px"></div>
  <span style="left:928px;top:600px">使用涨跌不定周期</span>
  <div class="fld" style="left:1030px;top:601px;width:194px"></div>

  <span style="left:1029px;top:624px">品种数</span>
  <div class="fld" style="left:1068px;top:624px;width:42px">5019</div>
  <span style="left:1114px;top:624px">选中数</span>
  <div class="fld" style="left:1152px;top:624px;width:72px">24/0.5%</div>

  <div class="cb" style="left:910px;top:652px"></div>
  <svg style="left:912px;top:655px" width="9" height="8" viewBox="0 0 9 8" fill="none" stroke="#1a9c1a" stroke-width="1.7"><path d="M1 3.8 L3.4 6.4 L8 1"/></svg>
  <span style="left:928px;top:651px">前复权数据</span>
  <div class="cb" style="left:997px;top:652px"></div>
  <span style="left:1015px;top:651px">剔除当前未交易的品种</span>
  <div class="cb" style="left:1144px;top:652px"></div>
  <span style="left:1162px;top:651px">剔除ST品种</span>

  <div class="cb" style="left:910px;top:681px"></div>
  <svg style="left:912px;top:684px" width="9" height="8" viewBox="0 0 9 8" fill="none" stroke="#1a9c1a" stroke-width="1.7"><path d="M1 3.8 L3.4 6.4 L8 1"/></svg>
  <span style="left:928px;top:680px">时间段内满足条件</span>
  <div class="btn" style="left:1072px;top:676px;width:72px">选股入板块</div>
  <div class="btn" style="left:1158px;top:676px;width:66px">执行选股</div>
  <div class="btn" style="left:1158px;top:703px;width:66px">关闭</div>

  <div class="cmb" style="left:910px;top:706px;width:96px;height:19px"><span style="font-size:11px;margin-top:-9px">2023-05-19</span><i></i></div>
  <span style="left:1021px;top:709px">-</span>
  <div class="cmb" style="left:1038px;top:706px;width:96px;height:19px"><span style="font-size:11px;margin-top:-9px">2023-06-12</span><i></i></div>

  <div class="grp" style="left:691px;top:584px;width:210px;height:143px"><b>选股范围</b></div>
  <span style="left:698px;top:598px">上证<i class="fw">A</i>股 深证<i class="fw">A</i>股</span>
  <div class="btn" style="left:826px;top:593px;width:63px">改变范围</div>
 </div>
</div>
<style>
#cw{position:absolute;left:1712px;top:32px;width:128px;height:32px;border-radius:7px;border:1px solid #1a9fff;background:#ecf7ff;overflow:hidden}
#cw .l{position:absolute;left:0;top:0;width:35px;height:30px;background:linear-gradient(135deg,#22a6ff,#0080ff)}
#cw .x{position:absolute;left:36px;top:0;width:90px;height:30px;line-height:32px;text-align:center;font-size:12px;color:#1a9fff;white-space:nowrap;padding-right:7px}
#ime .ic{position:absolute;top:0}
#sti>*{position:absolute}
</style>
<div id="cw"><div class="l"><svg width="35" height="30" viewBox="0 0 35 30" fill="none" stroke="#fff" stroke-width="2.3"><circle cx="17.2" cy="10.8" r="3.5"/><circle cx="11.8" cy="17.3" r="3.6"/><path d="M14.6 14.9 L19.5 9.5" stroke-width="0"/><path d="M20.6 14.6 A3.6 3.6 0 1 1 19.6 19.2"/><path d="M14.3 19.6 L20.4 13.2" stroke-width="2.3"/></svg></div><div class="x">拖拽上传</div></div>

<div id="ime" style="position:absolute;left:750px;top:1010px;width:166px;height:29px">
 <div style="position:absolute;left:5px;top:4px;width:160px;height:24px;background:#fbfcfe;border-radius:1px"></div>
 <div style="position:absolute;left:3px;top:3px;width:24px;height:24px;border-radius:4px;background:#3db31f;transform:rotate(-14deg)"></div>
 <svg class="ic" style="left:3px;top:3px" width="26" height="24" viewBox="0 0 26 24" fill="none" stroke="#fff" stroke-width="3.2" stroke-linecap="round"><path d="M20 6.2 C14 3.8 6.5 6.5 6.6 10 C6.8 13.2 19.6 10.6 19.8 14.2 C20 17.6 10 20.6 4.6 17.6"/></svg>
 <span class="ic" style="left:34px;top:6px;font-size:16px;line-height:18px;color:#4a4a5e;font-weight:bold;font-family:'Noto Sans CJK SC',sans-serif">五</span>
 <svg class="ic" style="left:57px;top:8px" width="16" height="16" viewBox="0 0 16 16"><path d="M10.17 0.85 A7.0 7.0 0 1 1 1.89 10.42 A6.6 6.6 0 0 0 10.17 0.85Z" fill="#4a4a5e"/></svg>
 <svg class="ic" style="left:79px;top:8px" width="16" height="16" viewBox="0 0 16 16"><circle cx="3.6" cy="4.6" r="2" fill="none" stroke="#4a4a5e" stroke-width="1.3"/><path d="M9.5 8.2 h3 v2.2 c0 2 -1 3.2 -2.8 3.6 l-0.4 -1 c1 -0.4 1.5 -1 1.5 -2 h-1.3 z" fill="#4a4a5e"/></svg>
 <svg class="ic" style="left:100px;top:9px" width="17" height="13" viewBox="0 0 17 13"><rect x="0.7" y="0.7" width="15.6" height="11.6" rx="1.5" fill="none" stroke="#4a4a5e" stroke-width="1.4"/><path d="M3 3.4h1.6M6 3.4h1.6M9 3.4h1.6M12 3.4h1.6M3 6.2h1.6M6 6.2h1.6M9 6.2h1.6M12 6.2h1.6M3.5 9.3h10" stroke="#4a4a5e" stroke-width="1.5"/></svg>
 <svg class="ic" style="left:124px;top:8px" width="14" height="15" viewBox="0 0 14 15" fill="#4a4a5e"><circle cx="7" cy="3.4" r="3"/><path d="M1 9.5 C2 7.2 4.5 6.8 7 6.8 S12 7.2 13 9.5 L11.5 11 L10.8 14.3 H3.2 L2.5 11 Z"/></svg>
 <svg class="ic" style="left:144px;top:8px" width="15" height="15" viewBox="0 0 15 15" fill="#4a4a5e"><path d="M7 7 H3.5 A3.3 3.3 0 1 1 7 3.5 Z"/><path d="M8 8 H11.5 A3.3 3.3 0 1 1 8 11.5 Z"/><path d="M7 8 V11.5 A3.3 3.3 0 1 1 3.5 8 Z"/><path d="M8 7 V3.5 A3.3 3.3 0 1 1 11.5 7 Z"/><circle cx="11.6" cy="3.4" r="1.3" fill="#fbfcfe"/></svg>
</div>

<div id="sti">
 <svg style="left:1127px;top:1020px" width="104" height="16" viewBox="0 0 104 16" shape-rendering="crispEdges">
  <g><rect x="1" y="1" width="50" height="7" fill="#111" /><rect x="13" y="2" width="12" height="5" fill="#f00"/><rect x="25" y="2" width="12" height="5" fill="#008c00"/><rect x="1.5" y="1.5" width="49" height="6" fill="none" stroke="#fff" stroke-width="1"/><rect x="37" y="1" width="1" height="7" fill="#fff"/>
  <path d="M5 10h6M5 12.5h6" stroke="#f00" stroke-width="1.5" fill="none"/>
  <path d="M21 10h6M21 12.5h6M37 10h6M37 12.5h6" stroke="#008c00" stroke-width="1.5" fill="none"/>
  <path d="M16 9v5M13.5 12l2.5 3l2.5-3z M32 15v-5M29.500 11.500l2.500-3l2.500 3z M48 15v-5M45.500 11.500l2.500-3l2.500 3z" stroke="#008c00" stroke-width="1.4" fill="#008c00"/></g>
  <g transform="translate(52,0)"><rect x="1" y="1" width="50" height="7" fill="#111" /><rect x="13" y="2" width="12" height="5" fill="#f00"/><rect x="25" y="2" width="12" height="5" fill="#008c00"/><rect x="1.5" y="1.5" width="49" height="6" fill="none" stroke="#fff" stroke-width="1"/><rect x="37" y="1" width="1" height="7" fill="#fff"/>
  <path d="M5 10h6M5 12.5h6" stroke="#f00" stroke-width="1.5" fill="none"/>
  <path d="M21 10h6M21 12.5h6M37 10h6M37 12.5h6" stroke="#008c00" stroke-width="1.5" fill="none"/>
  <path d="M16 9v5M13.5 12l2.5 3l2.5-3z M32 15v-5M29.500 11.500l2.500-3l2.500 3z M48 15v-5M45.500 11.500l2.500-3l2.500 3z" stroke="#008c00" stroke-width="1.4" fill="#008c00"/></g>
 </svg>
 <div style="left:1239px;top:1021px;width:15px;height:12px;border-radius:2px;background:linear-gradient(#a0a5ad,#7c818a)"></div>
 <svg style="left:1239px;top:1021px" width="15" height="12" viewBox="0 0 15 12" fill="none" stroke="#2a2d33" stroke-width="1"><circle cx="7.5" cy="6" r="1" fill="#2a2d33"/><path d="M5 3.5 C3.8 5 3.8 7 5 8.500 M10 3.5 C11.200 5 11.200 7 10 8.500"/></svg>
 <div style="left:1259px;top:1021px;width:15px;height:12px;border-radius:2px;background:linear-gradient(#a0a5ad,#7c818a);color:#fff;font-size:11px;line-height:12px;text-align:center;font-weight:bold">1</div>
 <span style="left:1277px;top:1013px;line-height:31px;font-size:12px;color:#d8d8d8;white-space:nowrap;letter-spacing:-.2px">北京联通主站Z2</span>
 <span style="left:1754px;top:1011px;line-height:29px;font-size:12px;color:#e0e0e0;white-space:nowrap">7x24</span>
 <svg style="left:1798px;top:1020px" width="16" height="12" viewBox="0 0 16 12"><rect width="15.500" height="12" rx="2" fill="#8c929c"/><path d="M3 3.500h10M3 5.500h10" stroke="#1b1e24" stroke-width="1" stroke-dasharray="1 .8"/><path d="M3 8.500h9.500" stroke="#1b1e24" stroke-width="1"/></svg>
 <svg style="left:1828px;top:1020px" width="16" height="13" viewBox="0 0 16 13"><rect width="15.500" height="9.500" rx="1.500" fill="#8c929c"/><path d="M2.500 5h2.500l1-1.500l1.500 3l1-1.500h3.500" stroke="#1b1e24" stroke-width="1" fill="none"/><path d="M7.700 9.500v2M4 12h7.500" stroke="#8c929c" stroke-width="1.200"/></svg>
 <svg style="left:1857px;top:1018px" width="16" height="16" viewBox="0 0 16 16" fill="#8c929c"><path d="M3 0.500 C-0.500 6.500 4.500 14 14.500 11.500 Z"/><path d="M8 6.500 L11.500 3" stroke="#8c929c" stroke-width="1.200"/><circle cx="11.800" cy="2.800" r="1.200"/><path d="M4.500 11 L2.500 14.500 H7 Z"/><rect x="1" y="14.200" width="7" height="1.300"/></svg>
 <svg style="left:1887px;top:1018px" width="17" height="17" viewBox="0 0 17 17"><circle cx="8.400" cy="8.500" r="7.700" fill="#8c929c"/><path d="M9.800 4 L5.500 9 H8.300 L7 13 L11.500 7.800 H8.600 Z" fill="#1b1e24"/></svg>
</div>
<style>.wm{position:absolute;width:200px;height:30px;margin:-15px 0 0 -100px;line-height:30px;text-align:center;font-size:24px;color:rgba(128,128,128,.25);transform:rotate(-45deg);white-space:nowrap;pointer-events:none;font-family:"Liberation Sans",sans-serif}</style>
<div id="wms">
<div class="wm" style="left:50px;top:154px">www.cfchi.com</div>
<div class="wm" style="left:335px;top:154px">www.cfchi.com</div>
<div class="wm" style="left:620px;top:154px">www.cfchi.com</div>
<div class="wm" style="left:905px;top:154px">www.cfchi.com</div>
<div class="wm" style="left:1190px;top:154px">www.cfchi.com</div>
<div class="wm" style="left:1475px;top:154px">www.cfchi.com</div>
<div class="wm" style="left:1760px;top:154px">www.cfchi.com</div>
<div class="wm" style="left:50px;top:374px">www.cfchi.com</div>
<div class="wm" style="left:335px;top:374px">www.cfchi.com</div>
<div class="wm" style="left:620px;top:374px">www.cfchi.com</div>
<div class="wm" style="left:905px;top:374px">www.cfchi.com</div>
<div class="wm" style="left:1190px;top:374px">www.cfchi.com</div>
<div class="wm" style="left:1475px;top:374px">www.cfchi.com</div>
<div class="wm" style="left:1760px;top:374px">www.cfchi.com</div>
<div class="wm" style="left:50px;top:594px">www.cfchi.com</div>
<div class="wm" style="left:335px;top:594px">www.cfchi.com</div>
<div class="wm" style="left:620px;top:594px">www.cfchi.com</div>
<div class="wm" style="left:905px;top:594px">www.cfchi.com</div>
<div class="wm" style="left:1190px;top:594px">www.cfchi.com</div>
<div class="wm" style="left:1475px;top:594px">www.cfchi.com</div>
<div class="wm" style="left:1760px;top:594px">www.cfchi.com</div>
<div class="wm" style="left:50px;top:814px">www.cfchi.com</div>
<div class="wm" style="left:335px;top:814px">www.cfchi.com</div>
<div class="wm" style="left:620px;top:814px">www.cfchi.com</div>
<div class="wm" style="left:905px;top:814px">www.cfchi.com</div>
<div class="wm" style="left:1190px;top:814px">www.cfchi.com</div>
<div class="wm" style="left:1475px;top:814px">www.cfchi.com</div>
<div class="wm" style="left:1760px;top:814px">www.cfchi.com</div>
</div></body></html>
